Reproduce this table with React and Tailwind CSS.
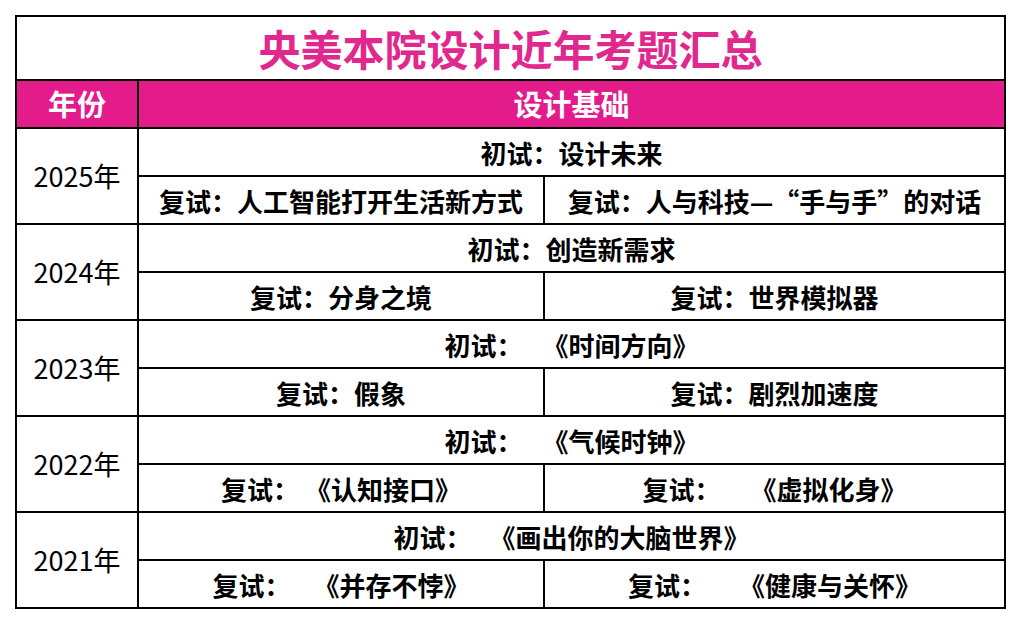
import React from 'react';

// gap: literal spacing class for the blank between label and title
const rows = [
    {
        year: '2025年',
        first: { label: '初试：', title: '设计未来' },
        left: { label: '复试：', title: '人工智能打开生活新方式' },
        right: { label: '复试：', title: '人与科技—“手与手”的对话' },
    },
    {
        year: '2024年',
        first: { label: '初试：', title: '创造新需求' },
        left: { label: '复试：', title: '分身之境' },
        right: { label: '复试：', title: '世界模拟器' },
    },
    {
        year: '2023年',
        first: { label: '初试：', title: '《时间方向》', gap: 'w-[20px]' },
        left: { label: '复试：', title: '假象' },
        right: { label: '复试：', title: '剧烈加速度' },
    },
    {
        year: '2022年',
        first: { label: '初试：', title: '《气候时钟》', gap: 'w-[20px]' },
        left: { label: '复试：', title: '《认知接口》', gap: 'w-[6px]' },
        right: { label: '复试：', title: '《虚拟化身》', gap: 'w-[30px]' },
    },
    {
        year: '2021年',
        first: { label: '初试：', title: '《画出你的大脑世界》', gap: 'w-[18px]' },
        left: { label: '复试：', title: '《并存不悖》', gap: 'w-[23px]' },
        right: { label: '复试：', title: '《健康与关怀》', gap: 'w-[33px]' },
    },
];

function Entry({ item }) {
    return (
        <span className="flex items-center font-bold text-[26px] whitespace-nowrap">
            <span>{item.label}</span>
            {item.gap && <span className={`inline-block shrink-0 ${item.gap}`} />}
            <span>{item.title}</span>
        </span>
    );
}

function YearGroup({ row }) {
    return (
        <div className="flex border-t-2 border-black">
            <div className="w-[122px] shrink-0 border-r-2 border-black flex items-center justify-center text-[27px] text-black">
                {row.year}
            </div>
            <div className="flex-1 flex flex-col">
                <div className="h-[46px] flex items-center justify-center">
                    <Entry item={row.first} />
                </div>
                <div className="h-[48px] flex border-t-2 border-black">
                    <div className="w-[406px] shrink-0 border-r-2 border-black flex items-center justify-center">
                        <Entry item={row.left} />
                    </div>
                    <div className="flex-1 flex items-center justify-center">
                        <Entry item={row.right} />
                    </div>
                </div>
            </div>
        </div>
    );
}

export default function App() {
    return (
        <div className="w-[1022px] h-[624px] bg-white pt-[15px] pl-[15px] font-['Noto_Sans_CJK_SC',sans-serif] text-black">
            <div className="w-[991px] border-2 border-black">
                <div className="h-[62px] flex items-center justify-center text-[42px] font-bold text-[#e0288e] leading-none">
                    央美本院设计近年考题汇总
                </div>
                <div className="h-[48px] flex border-t-2 border-black bg-[#e31b8b] text-white font-bold text-[29px]">
                    <div className="w-[122px] shrink-0 border-r-2 border-black flex items-center justify-center">
                        年份
                    </div>
                    <div className="flex-1 flex items-center justify-center">
                        设计基础
                    </div>
                </div>
                {rows.map((row) => (
                    <YearGroup key={row.year} row={row} />
                ))}
            </div>
        </div>
    );
}
